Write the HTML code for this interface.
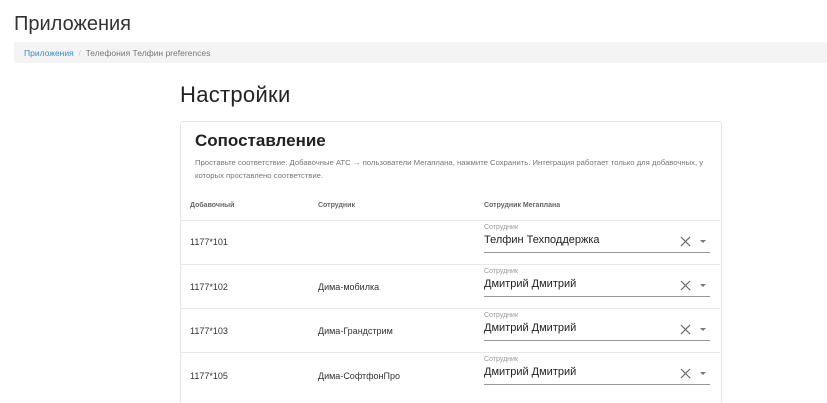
<!DOCTYPE html>
<html style="overflow:hidden;height:403px"><head><meta charset="utf-8"><style>
body{margin:0;width:827px;height:403px;overflow:hidden;background:#fff;font-family:"Liberation Sans","DejaVu Sans",sans-serif;color:#333;position:relative}
.a{position:absolute;white-space:nowrap}
.card{position:absolute;left:180px;top:121px;width:540px;height:290px;border:1px solid #e6e6e6;border-radius:3px}
.sep{position:absolute;left:181px;width:539px;height:1px;background:#e8e8e8}
.ul{position:absolute;left:484px;width:226px;height:1px;background:#999}
.x{position:absolute;left:680px;width:11px;height:11px}
.tri{position:absolute;left:700px;width:0;height:0;border-left:3px solid transparent;border-right:3px solid transparent;border-top:3px solid #777}
</style></head><body>
<div class="a" style="left:14px;top:13px;font-size:20px;color:#333">Приложения</div>
<div class="a" style="left:14px;top:42px;width:813px;height:21px;background:#f4f4f4"></div>
<div class="a" style="left:24px;top:48px;font-size:8.5px;color:#777"><span style="color:#3a8fc0">Приложения</span> <span style="color:#ccc">&nbsp;/&nbsp;</span> Телефония Телфин preferences</div>
<div class="a" style="left:180px;top:82px;font-size:22px;color:#222;letter-spacing:0.3px">Настройки</div>
<div class="card"></div>
<div class="a" style="left:195px;top:131px;font-size:17px;font-weight:bold;color:#222">Сопоставление</div>
<div class="a" style="left:195px;top:156px;font-size:7.7px;color:#777;line-height:13px">Проставьте соответствие: Добавочные АТС → пользователи Мегаплана, нажмите Сохранить. Интеграция работает только для добавочных, у<br>которых проставлено соответствие.</div>
<div class="a" style="left:190px;top:202px;font-size:7px;font-weight:bold;color:#666">Добавочный</div>
<div class="a" style="left:318px;top:202px;font-size:7px;font-weight:bold;color:#666">Сотрудник</div>
<div class="a" style="left:484px;top:202px;font-size:7px;font-weight:bold;color:#666">Сотрудник Мегаплана</div>

<div class="sep" style="top:220px"></div>
<div class="sep" style="top:264px"></div>
<div class="sep" style="top:308px"></div>
<div class="sep" style="top:352px"></div>

<div class="a" style="left:190px;top:237px;font-size:9px">1177*101</div>
<div class="a" style="left:484px;top:224px;font-size:7px;color:#999">Сотрудник</div>
<div class="a" style="left:484px;top:234px;font-size:11px;color:#222">Телфин Техподдержка</div>
<div class="ul" style="top:252px"></div>

<div class="a" style="left:190px;top:282px;font-size:9px">1177*102</div>
<div class="a" style="left:318px;top:282px;font-size:9px">Дима-мобилка</div>
<div class="a" style="left:484px;top:268px;font-size:7px;color:#999">Сотрудник</div>
<div class="a" style="left:484px;top:278px;font-size:11px;color:#222">Дмитрий Дмитрий</div>
<div class="ul" style="top:296px"></div>

<div class="a" style="left:190px;top:326px;font-size:9px">1177*103</div>
<div class="a" style="left:318px;top:326px;font-size:9px">Дима-Грандстрим</div>
<div class="a" style="left:484px;top:312px;font-size:7px;color:#999">Сотрудник</div>
<div class="a" style="left:484px;top:322px;font-size:11px;color:#222">Дмитрий Дмитрий</div>
<div class="ul" style="top:340px"></div>

<div class="a" style="left:190px;top:371px;font-size:9px">1177*105</div>
<div class="a" style="left:318px;top:371px;font-size:9px">Дима-СофтфонПро</div>
<div class="a" style="left:484px;top:356px;font-size:7px;color:#999">Сотрудник</div>
<div class="a" style="left:484px;top:366px;font-size:11px;color:#222">Дмитрий Дмитрий</div>
<div class="ul" style="top:384px"></div>

<svg class="x" style="top:236px" viewBox="0 0 11 11"><path d="M1 1L10 10M10 1L1 10" stroke="#666" stroke-width="1.2"/></svg>
<svg class="x" style="top:280px" viewBox="0 0 11 11"><path d="M1 1L10 10M10 1L1 10" stroke="#666" stroke-width="1.2"/></svg>
<svg class="x" style="top:324px" viewBox="0 0 11 11"><path d="M1 1L10 10M10 1L1 10" stroke="#666" stroke-width="1.2"/></svg>
<svg class="x" style="top:368px" viewBox="0 0 11 11"><path d="M1 1L10 10M10 1L1 10" stroke="#666" stroke-width="1.2"/></svg>
<div class="tri" style="top:240px"></div>
<div class="tri" style="top:284px"></div>
<div class="tri" style="top:328px"></div>
<div class="tri" style="top:372px"></div>
</body></html>
